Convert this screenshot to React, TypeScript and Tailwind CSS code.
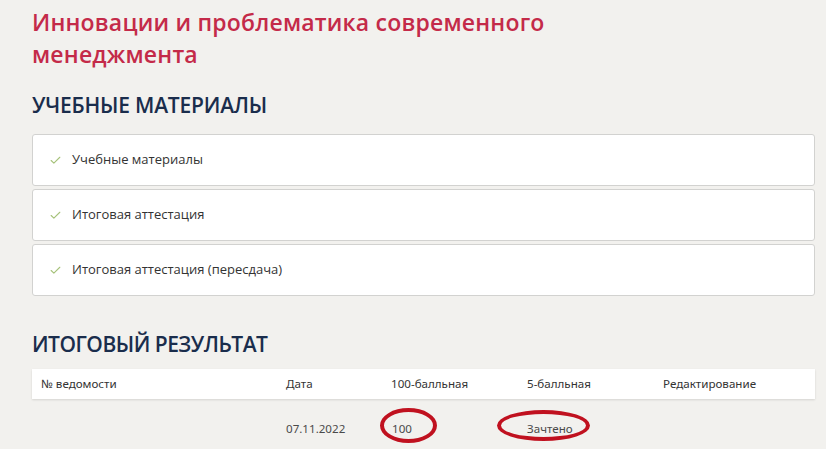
import { Check } from "lucide-react";

const materials = [
  "Учебные материалы",
  "Итоговая аттестация",
  "Итоговая аттестация (пересдача)",
];

const columns = ["№ ведомости", "Дата", "100-балльная", "5-балльная", "Редактирование"];

function Circled({
  children,
  ring,
}: {
  children: React.ReactNode;
  ring: string;
}) {
  return (
    <span className="relative inline-block">
      {children}
      <span
        className={`pointer-events-none absolute rounded-[50%] border-[4px] border-[#c0111f] ${ring}`}
      />
    </span>
  );
}

export default function App() {
  return (
    <div
      className="min-h-[449px] w-full bg-[#f2f1ee] pl-8 pr-[11px] pt-[6px] overflow-hidden"
      style={{ fontFamily: '"Open Sans", "Noto Sans", sans-serif' }}
    >
      {/* ************** Title ************** */}
      <h1 className="text-[23px] leading-[32px] font-semibold text-[#c42a49] tracking-[0.2px]">
        Инновации и проблематика современного
        <br />
        менеджмента
      </h1>

      <h2 className="mt-[20px] text-[21px] leading-[30px] font-semibold text-[#1a2d4c] tracking-[-0.2px]">
        УЧЕБНЫЕ МАТЕРИАЛЫ
      </h2>

      <div className="mt-[14px] flex flex-col gap-[3px]">
        {materials.map((m) => (
          <div
            key={m}
            className="flex h-[52px] items-center gap-[10px] rounded-[3px] border border-[#d2d2d0] bg-white pl-[16px]"
          >
            <Check size={13} strokeWidth={2} className="text-[#a6c27a]" />
            <span className="text-[13px] text-[#333]">{m}</span>
          </div>
        ))}
      </div>

      <h2 className="mt-[33px] text-[21px] leading-[30px] font-semibold text-[#1a2d4c] tracking-[-0.5px]">
        ИТОГОВЫЙ РЕЗУЛЬТАТ
      </h2>

      {/* ************** Table ************** */}
      <div
        className="mt-[10px] text-[11.6px] text-[#333]"
        style={{ fontFamily: '"Noto Sans", "Open Sans", sans-serif' }}
      >
        <div className="grid h-[30px] grid-cols-[245px_105px_136px_136px_1fr] items-center bg-white shadow-[0_1px_2px_rgba(0,0,0,0.12)]">
          {columns.map((c) => (
            <span key={c} className="pl-[9px]">
              {c}
            </span>
          ))}
        </div>
        <div className="grid h-[58px] grid-cols-[245px_105px_136px_136px_1fr] items-start pt-[21px] text-[#4a4a4a]">
          <span />
          <span className="pl-[9px]">07.11.2022</span>
          <span className="pl-[10px]">
            <Circled ring="-left-[12px] -top-[12px] w-[57px] h-[35px]">100</Circled>
          </span>
          <span className="pl-[9px]">
            <Circled ring="-left-[30px] -top-[10px] w-[93px] h-[31px]">Зачтено</Circled>
          </span>
          <span />
        </div>
      </div>
    </div>
  );
}
